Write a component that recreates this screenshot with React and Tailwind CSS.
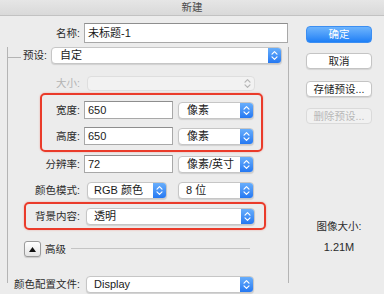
const Chevrons = ({ color = "white" }) => (
  <svg width="7" height="11" viewBox="0 0 7 11" fill="none" stroke={color} strokeWidth="1.2" strokeLinecap="round" strokeLinejoin="round">
    <path d="M1 4.2 L3.5 1.7 L6 4.2" />
    <path d="M1 6.8 L3.5 9.3 L6 6.8" />
  </svg>
)

const Select = ({ value, className = "", h = "h-[17px]", pad = "pl-[7px]" }) => (
  <div className={`flex items-stretch bg-white rounded-[4px] border border-[#c6c6c6] shadow-[0_1px_1px_rgba(0,0,0,0.12)] overflow-hidden ${h} ${className}`}>
    <div className={`flex-1 flex items-center ${pad} text-[11px] text-[#1a1a1a] leading-none whitespace-nowrap`}>{value}</div>
    <div className="w-[13px] flex items-center justify-center bg-gradient-to-b from-[#68aefb] to-[#2478f2]">
      <Chevrons />
    </div>
  </div>
)

const Input = ({ value, className = "" }) => (
  <div className={`flex items-center bg-white border border-[#a8a8a8] border-t-[#8e8e8e] pl-[3px] text-[11px] text-[#1a1a1a] leading-none ${className}`}>
    {value}
  </div>
)

const Label = ({ children, className = "", muted }) => (
  <div className={`text-right text-[10.5px] leading-none whitespace-nowrap ${muted ? "text-[#b3b3b3]" : "text-[#2b2b2b]"} ${className}`}>
    {children}
  </div>
)

const Button = ({ children, variant = "default", className = "" }) => {
  const styles = {
    primary: "bg-gradient-to-b from-[#6db4fc] to-[#1c7ff6] text-white border border-[#3b8ef2]",
    default: "bg-white text-[#1f1f1f] border border-[#c4c4c4] shadow-[0_1px_1px_rgba(0,0,0,0.1)]",
    disabled: "bg-[#f1f1f1] text-[#b8b8b8] border border-[#dadada]",
  }
  return (
    <div className={`w-[66px] rounded-[4px] flex items-center justify-center text-[10.5px] leading-none ${styles[variant]} ${className}`}>
      {children}
    </div>
  )
}

export default function App() {
  return (
    <div className="relative w-[384px] h-[294px] overflow-hidden bg-[#ececec] font-['Liberation_Sans','Noto_Sans_CJK_SC',sans-serif]">
      <div className="h-[16px] bg-gradient-to-b from-[#e6e6e6] to-[#d9d9d9] border-b border-[#c2c2c2] flex items-center justify-center text-[10.5px] text-[#4a4a4a] leading-none">
        新建
      </div>

      <div className="flex">
        <div className="w-[290px]">
          <div className="flex items-center mt-[7px] h-[20px]">
            <Label className="w-[80px]">名称:</Label>
            <Input value="未标题-1" className="ml-[4px] w-[204px] h-[20px]" />
          </div>

          <div className="mt-[14px] ml-[7px] w-[282px] h-[236px] border-x border-[#b4b4b4]">
            <div className="flex items-center -mt-[10px] h-[17px]">
              <div className="w-[13px] h-px bg-[#b4b4b4] mt-[3px]" />
              <Label className="ml-[2px]">预设:</Label>
              <Select value="自定" className="ml-[4px] w-[231px]" pad="pl-[8px]" />
            </div>

            <div className="flex items-center mt-[12px] h-[15px]">
              <Label muted className="w-[72px]">大小:</Label>
              <div className="ml-[7px] w-[168px] h-[15px] rounded-[4px] bg-[#f2f2f2] border border-[#dedede] flex items-center justify-end pr-[3px]">
                <Chevrons color="#b5b5b5" />
              </div>
            </div>

            <div className="flex items-center mt-[10px] h-[18px]">
              <Label className="w-[72px]">宽度:</Label>
              <Input value="650" className="ml-[4px] w-[89px] h-[18px]" />
              <Select value="像素" className="ml-[5px] w-[76px]" pad="pl-[8px]" />
            </div>

            <div className="flex items-center mt-[8px] h-[18px]">
              <Label className="w-[72px]">高度:</Label>
              <Input value="650" className="ml-[4px] w-[89px] h-[18px]" />
              <Select value="像素" className="ml-[5px] w-[76px]" pad="pl-[8px]" />
            </div>

            <div className="flex items-center mt-[10px] h-[18px]">
              <Label className="w-[72px]">分辨率:</Label>
              <Input value="72" className="ml-[4px] w-[89px] h-[18px]" />
              <Select value="像素/英寸" className="ml-[5px] w-[76px]" pad="pl-[8px]" />
            </div>

            <div className="flex items-center mt-[9px] h-[17px]">
              <Label className="w-[72px]">颜色模式:</Label>
              <Select value="RGB 颜色" className="ml-[7px] w-[80px]" pad="pl-[6px]" />
              <Select value="8 位" className="ml-[11px] w-[76px]" pad="pl-[7px]" />
            </div>

            <div className="flex items-center mt-[9px] h-[17px]">
              <Label className="w-[72px]">背景内容:</Label>
              <Select value="透明" className="ml-[6px] w-[169px]" />
            </div>

            <div className="flex items-center mt-[16px] h-[16px]">
              <div className="ml-[16px] w-[17px] h-[16px] rounded-[3px] border border-[#9a9a9a] bg-gradient-to-b from-white to-[#e4e4e4] shadow-[0_1px_1px_rgba(0,0,0,0.15)] flex items-center justify-center">
                <svg width="7" height="5" viewBox="0 0 7 5"><path d="M0 5 L3.5 0 L7 5 Z" fill="#111" /></svg>
              </div>
              <div className="ml-[4px] text-[10.5px] text-[#2b2b2b] leading-none">高级</div>
              <div className="ml-[5px] w-[179px] h-px bg-[#c4c4c4] -mt-[2px]" />
            </div>

            <div className="flex items-center mt-[19px] h-[17px]">
              <Label className="w-[72px]">颜色配置文件:</Label>
              <Select value="Display" className="ml-[6px] w-[168px]" />
            </div>
          </div>
        </div>

        <div className="pl-[16px] pt-[10px] flex flex-col">
          <Button variant="primary" className="h-[17px]">确定</Button>
          <Button className="mt-[10px] h-[16px]">取消</Button>
          <Button className="mt-[12px] h-[16px]">存储预设...</Button>
          <Button variant="disabled" className="mt-[11px] h-[16px]">删除预设...</Button>
          <div className="mt-[95px] w-[66px] text-center text-[10.5px] leading-[14px] text-[#2b2b2b]">图像大小:</div>
          <div className="mt-[7px] w-[66px] text-center text-[11px] leading-[14px] text-[#2b2b2b]">1.21M</div>
        </div>
      </div>

      <div className="absolute left-[40px] top-[93px] w-[223px] h-[59px] rounded-[5px] border-2 border-[#ea3b2a] shadow-[0_0_2px_rgba(234,59,42,0.4)]" />
      <div className="absolute left-[24px] top-[202px] w-[242px] h-[28px] rounded-[5px] border-2 border-[#ea3b2a] shadow-[0_0_2px_rgba(234,59,42,0.4)]" />
    </div>
  )
}
